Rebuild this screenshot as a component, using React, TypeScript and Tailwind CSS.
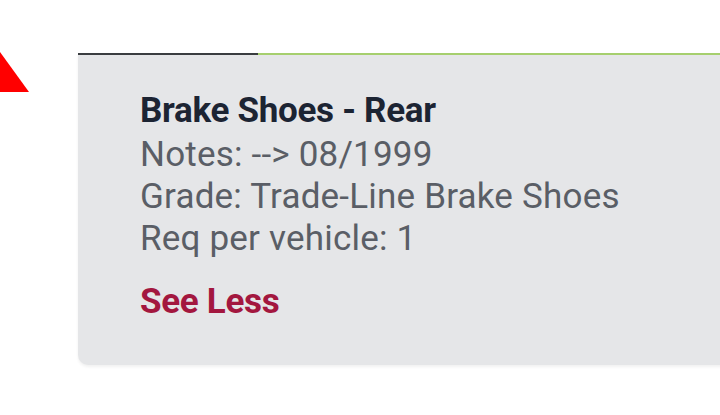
export default function App() {
  return (
    <div className="relative w-[720px] h-[415px] overflow-hidden bg-white" style={{ fontFamily: "Roboto, 'Liberation Sans', sans-serif" }}>
      {/* red annotation arrow tip */}
      <svg className="absolute left-0 top-0" width="40" height="100" viewBox="0 0 40 100">
        <polygon points="0,52 29,92 0,92" fill="#ff0000" />
      </svg>

      <div className="ml-[78px] mt-[53px] w-[660px] bg-[#e5e6e8] rounded-bl-[10px] shadow-[0_2px_3px_rgba(0,0,0,0.06)]">
        <div className="flex h-[2px]">
          <div className="w-[180px] bg-[#3a3d40]" />
          <div className="flex-1 bg-[#a6cf6e]" />
        </div>
        <div className="pl-[62px] pt-[32px] pb-[42px]">
          <h2 className="text-[35px] leading-[47px] font-bold text-[#1c2433] tracking-[-0.3px]">Brake Shoes - Rear</h2>
          <div className="text-[35px] leading-[42px] text-[#5a5e66] tracking-[0.2px]">
            <p>Notes: --&gt; 08/1999</p>
            <p>Grade: Trade-Line Brake Shoes</p>
            <p>Req per vehicle: 1</p>
          </div>
          <button className="mt-[21px] text-[35px] leading-[42px] font-bold text-[#a3173f] tracking-[-0.3px]">See Less</button>
        </div>
      </div>
    </div>
  );
}
